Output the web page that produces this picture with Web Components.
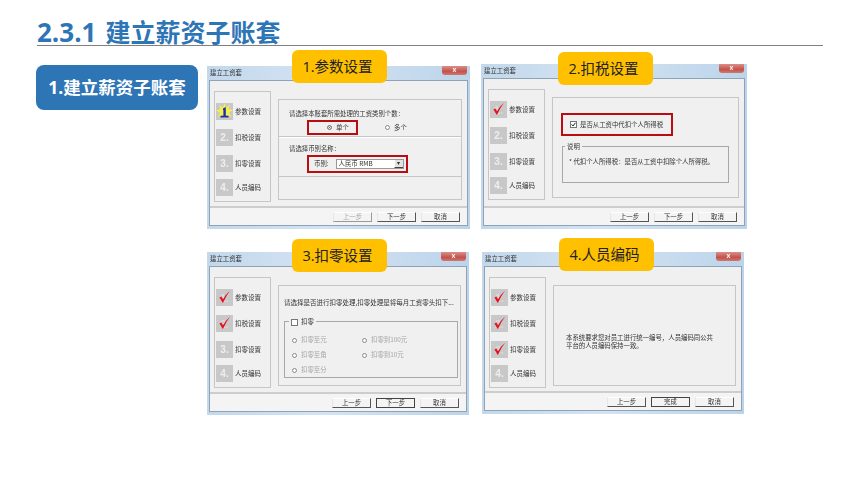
<!DOCTYPE html>
<html lang="zh">
<head>
<meta charset="utf-8">
<title>2.3.1 建立薪资子账套</title>
<style>
  html, body { margin: 0; padding: 0; background: #fff; }
  body { width: 860px; height: 484px; overflow: hidden; font-family: "Open Sans", "Noto Sans CJK SC", sans-serif; }
</style>
</head>
<body>
<salary-slide></salary-slide>
<script>
// small base class, every element just gives its css and markup
class Part extends HTMLElement {
  constructor() {
    super();
    this.attachShadow({mode: 'open'});
  }
  connectedCallback() {
    this.shadowRoot.innerHTML = `<style>${this.css()}</style>${this.html()}`;
  }
  css() { return ':host { display: block; }'; }
  html() { return '<slot></slot>'; }
  attr(name, fallback = '') { return this.getAttribute(name) || fallback; }
}

class SalarySlide extends Part {
  css() {
    return `
      :host { display: block; width: 860px; height: 484px; }
      header {
        margin: 0 37px;
        height: 45px;
        border-bottom: 1px solid #808080;
        color: #2e75b6;
        font: 700 26px/1 "Open Sans", "Noto Sans CJK SC", sans-serif;
        display: flex;
        align-items: flex-end;
        gap: 9px;
      }
      header span { display: block; }
      header .cn { font-size: 25px; }
      main { display: flex; gap: 9px; margin: 18px 0 0 36px; align-items: flex-start; }
      .pill {
        width: 162px;
        height: 45px;
        margin-top: 1px;
        border-radius: 8px;
        background: #2e75b6;
        color: #fff;
        font: 700 17.5px/44px "Open Sans", "Noto Sans CJK SC", sans-serif;
        text-align: center;
        flex: none;
      }
      .grid { display: grid; grid-template-columns: 263px 266px; grid-template-rows: 165px 165px; column-gap: 11px; row-gap: 23px; }
      .d1 { margin-top: 2px; }
      .d4 { margin-left: 1px; margin-right: 3px; margin-bottom: 3px; }
      .d3 { margin-bottom: 2px; margin-right: 1px; }
    `;
  }
  html() {
    return `
      <header><span>2.3.1</span><span class="cn">建立薪资子账套</span></header>
      <main>
        <div class="pill">1.建立薪资子账套</div>
        <div class="grid">
          <wage-dialog class="d1" badge="1.参数设置" badge-x="85" badge-y="-16" done="0" back-off>
            <panel-params></panel-params>
          </wage-dialog>
          <wage-dialog class="d2" badge="2.扣税设置" badge-x="77" badge-y="-12" done="1">
            <panel-tax></panel-tax>
          </wage-dialog>
          <wage-dialog class="d3" badge="3.扣零设置" badge-x="85" badge-y="-13" done="2" default-next>
            <panel-round></panel-round>
          </wage-dialog>
          <wage-dialog class="d4" badge="4.人员编码" badge-x="77" badge-y="-14" done="3" default-next next="完成">
            <panel-code></panel-code>
          </wage-dialog>
        </div>
      </main>
    `;
  }
}

class WageDialog extends Part {
  css() {
    return `
      :host { display: block; position: relative; }
      .window {
        height: 100%;
        box-sizing: border-box;
        display: flex;
        flex-direction: column;
        padding: 0 2px 3px;
        background: linear-gradient(90deg, #c3d8ec 0%, #d3e3f2 45%, #bcd4ea 100%);
        filter: blur(.45px);
        color: #333;
        font: 6.4px/1.2 "Noto Sans CJK SC", sans-serif;
      }
      .title { height: 14px; flex: none; display: flex; align-items: flex-start; color: #333; line-height: 13px; margin-left: 1px; }
      .close {
        margin: 0 1px 0 auto;
        width: 25px;
        height: 9px;
        border-radius: 0 0 3px 3px;
        background: linear-gradient(#d98f89, #c4524b 60%, #cf7770);
        color: #fff;
        font: 700 7px/8px "Liberation Sans", sans-serif;
        text-align: center;
      }
      .body { flex: 1; min-height: 0; display: flex; flex-direction: column; background: #f0f0f0; border: 1px solid #8ea3b6; }
      .content { flex: 1; min-height: 0; display: flex; gap: 7px; padding: 10px 5px 0 4px; align-items: flex-start; }
      .steps {
        flex: none;
        width: 54px;
        height: 98px;
        padding: 11px 0 0 1px;
        border: 1px solid #c6c6c6;
        display: flex;
        flex-direction: column;
        gap: 9px;
      }
      .panel { flex: 1; min-width: 0; height: 99px; margin-top: 8px; border: 1px solid #c6c6c6; }
      .foot {
        flex: none;
        height: 17px;
        border-top: 2px solid #cdcdcd;
        background: #f4f4f4;
        display: flex;
        justify-content: flex-end;
        align-items: center;
        gap: 5px;
        padding-right: 7px;
      }
      .badge {
        position: absolute;
        box-sizing: border-box;
        width: 95px;
        height: 33px;
        padding-right: 4px;
        border-radius: 6px;
        background: #ffc000;
        color: #222;
        font: 14.5px/33px "Open Sans", "Noto Sans CJK SC", sans-serif;
        text-align: center;
      }
    `;
  }
  html() {
    const done = +this.attr('done', '0');
    const labels = ['参数设置', '扣税设置', '扣零设置', '人员编码'];
    const steps = labels.map((label, i) => {
      const state = i < done ? 'done' : (i === 0 && done === 0 ? 'active' : 'todo');
      return `<wage-step n="${i + 1}" state="${state}">${label}</wage-step>`;
    }).join('');
    return `
      <div class="window">
        <div class="title"><span>建立工资套</span><div class="close">x</div></div>
        <div class="body">
          <div class="content">
            <div class="steps">${steps}</div>
            <div class="panel"><slot></slot></div>
          </div>
          <div class="foot">
            <wage-button ${this.hasAttribute('back-off') ? 'off' : ''}>上一步</wage-button>
            <wage-button ${this.hasAttribute('default-next') ? 'main' : ''}>${this.attr('next', '下一步')}</wage-button>
            <wage-button>取消</wage-button>
          </div>
        </div>
      </div>
      <div class="badge" style="left:${this.attr('badge-x')}px;top:${this.attr('badge-y')}px">${this.attr('badge')}</div>
    `;
  }
}

class WageStep extends Part {
  css() {
    return `
      :host { display: flex; align-items: center; gap: 2px; height: 17px; }
      :host([n="4"]) { margin-top: -2px; }
      .thumb { position: relative; width: 17px; height: 17px; background: #c8c8c8; flex: none; color: #eee; font: 700 10px/17px "Liberation Sans", sans-serif; text-align: center; }
      :host([state="done"]) .thumb { color: #dcdcdc; padding-top: 2px; height: 15px; line-height: 15px; }
      svg { position: absolute; left: 0; top: 0; }
      .label { white-space: nowrap; font-size: 6.5px; color: #333; }
    `;
  }
  html() {
    const n = this.attr('n');
    const state = this.attr('state');
    let art = '';
    if (state === 'done') {
      art = `<svg width="17" height="17" viewBox="0 0 17 17"><path d="M3.4 8.4 L5.4 7.6 L7 10.2 Q9.6 5.6 14 1.8 Q10.2 6.8 7.2 13.4 L6.2 13.4 Q5 10.6 3.4 8.4 Z" fill="#e6121f"/></svg>`;
    }
    if (state === 'active') {
      art = `<svg width="17" height="17" viewBox="0 0 17 17">
        <path d="M8.5 0 L10 4.5 L14 2 L12.5 6 L17 7 L13 9.5 L15.5 14 L10.5 12 L8.5 16 L7 12 L2 14 L4 9.5 L0 7.5 L4.5 6 L3 2 L7 4.5 Z" fill="#f5ef4a"/>
        <path d="M7 5.5 L9.8 4 V12.8 H12.5 V14.6 H4.5 V12.8 H7.4 V7 L7 7 Z" fill="#1b2fa8"/>
      </svg>`;
    }
    return `<div class="thumb">${state === 'active' ? '' : n + '.'}${art}</div><div class="label"><slot></slot></div>`;
  }
}

class WageButton extends Part {
  css() {
    return `
      :host {
        display: block;
        width: 39px;
        height: 10px;
        box-sizing: border-box;
        border-right: 1px solid #555;
        border-bottom: 1px solid #555;
        border-left: 1px solid #e6e6e6;
        border-top: 1px solid #fff;
        text-align: center;
        font-size: 6.4px;
        line-height: 8px;
        color: #333;
      }
      :host([off]) { color: #a8a8a8; border-right-color: #999; border-bottom-color: #999; }
      :host([main]) { border: 1px solid #444; }
    `;
  }
}

class DlgRadio extends Part {
  css() {
    return `
      :host { display: inline-flex; align-items: center; gap: 4px; white-space: nowrap; font-size: 6.4px; line-height: 8px; }
      :host([off]) { color: #a6a6a6; }
      i { display: block; box-sizing: border-box; width: 5px; height: 5px; border: 1px solid #888; border-radius: 50%; background: #fff; }
      :host([on]) i { background: #333; box-shadow: inset 0 0 0 1px #fff; }
    `;
  }
  html() { return '<i></i><span><slot></slot></span>'; }
}

class DlgCheck extends Part {
  css() {
    return `
      :host { display: inline-flex; align-items: center; gap: 3px; white-space: nowrap; font-size: 6.4px; line-height: 8px; }
      i { display: block; width: 5px; height: 5px; border: 1px solid #777; background: #fff; position: relative; }
      svg { position: absolute; left: 0; top: 0; }
    `;
  }
  html() {
    const tick = this.hasAttribute('on') ? '<svg width="5" height="5" viewBox="0 0 5 5"><path d="M.6 2.4 L2 4 L4.4 .8" fill="none" stroke="#222" stroke-width="1"/></svg>' : '';
    return `<i>${tick}</i><span><slot></slot></span>`;
  }
}

class RedFrame extends Part {
  css() { return ':host { display: block; box-sizing: border-box; border: 2px solid #b90d12; }'; }
}

class DlgGroup extends Part {
  css() {
    return `
      :host { display: block; position: relative; box-sizing: border-box; border: 1px solid #a8a8a8; }
      .legend { position: absolute; left: var(--legend-x, 2px); top: -4px; padding: 0 2px; background: #f0f0f0; line-height: 8px; font-size: 6.4px; }
    `;
  }
  html() { return '<div class="legend"><slot name="legend"></slot></div><slot></slot>'; }
}

class PanelParams extends Part {
  css() {
    return `
      :host { display: flex; flex-direction: column; height: 100%; }
      section { border-bottom: 1px solid #c6c6c6; box-sizing: border-box; }
      .a { height: 37px; padding: 10px 0 0 10px; }
      .b { height: 40px; padding: 7px 0 0 10px; border-top: 1px solid #fff; }
      .c { flex: 1; border: 0; }
      p { margin: 0; line-height: 8px; white-space: nowrap; }
      .row { display: flex; margin: 2px 0 0 18px; align-items: center; }
      .one { width: 51px; height: 15px; display: flex; justify-content: center; align-items: center; padding-left: 11px; }
      .many { margin-left: 27px; }
      .cur { width: 101px; height: 18px; margin: 2px 0 0 18px; display: flex; align-items: center; padding-left: 5px; gap: 7px; }
      .select { width: 68px; height: 10px; box-sizing: border-box; background: #fff; border: 1px solid #999; display: flex; justify-content: space-between; line-height: 8px; padding-left: 2px; }
      .select b { display: block; width: 8px; background: #e2e2e2; border-left: 1px solid #fff; border-bottom: 1px solid #444; text-align: center; font: 6px/7px "Liberation Sans", sans-serif; }
    `;
  }
  html() {
    return `
      <section class="a">
        <p>请选择本账套所需处理的工资类别个数：</p>
        <div class="row">
          <red-frame class="one"><dlg-radio on>单个</dlg-radio></red-frame>
          <dlg-radio class="many">多个</dlg-radio>
        </div>
      </section>
      <section class="b">
        <p>请选择币别名称：</p>
        <red-frame class="cur"><span>币别:</span><div class="select"><span>人民币 RMB</span><b>▾</b></div></red-frame>
      </section>
      <section class="c"></section>
    `;
  }
}

class PanelTax extends Part {
  css() {
    return `
      :host { display: block; padding: 15px 0 0 8px; }
      .hit { width: 112px; height: 23px; display: flex; align-items: center; padding-left: 7px; }
      dlg-group { width: 167px; height: 37px; margin: 10px 0 0 1px; }
      p { margin: 0; padding: 10px 0 0 6px; white-space: nowrap; line-height: 9px; }
    `;
  }
  html() {
    return `
      <red-frame class="hit"><dlg-check on>是否从工资中代扣个人所得税</dlg-check></red-frame>
      <dlg-group><span slot="legend">说明</span><p>* 代扣个人所得税：是否从工资中扣除个人所得税。</p></dlg-group>
    `;
  }
}

class PanelRound extends Part {
  css() {
    return `
      :host { display: block; padding: 12px 0 0 5px; }
      p { margin: 0; white-space: nowrap; line-height: 9px; font-size: 6.5px; }
      dlg-group { width: 174px; height: 57px; margin-top: 14px; --legend-x: 4px; }
      .opts { display: grid; grid-template-columns: 70px 80px; row-gap: 7px; padding: 14px 0 0 7px; }
    `;
  }
  html() {
    return `
      <p>请选择是否进行扣零处理,扣零处理是将每月工资零头扣下...</p>
      <dlg-group>
        <dlg-check slot="legend">扣零</dlg-check>
        <div class="opts">
          <dlg-radio off>扣零至元</dlg-radio><dlg-radio off>扣零到100元</dlg-radio>
          <dlg-radio off>扣零至角</dlg-radio><dlg-radio off>扣零到10元</dlg-radio>
          <dlg-radio off>扣零至分</dlg-radio>
        </div>
      </dlg-group>
    `;
  }
}

class PanelCode extends Part {
  css() {
    return `
      :host { display: block; padding: 48px 0 0 12px; }
      p { margin: 0; line-height: 7.5px; font-size: 6.4px; width: 150px; }
    `;
  }
  html() { return '<p>本系统要求您对员工进行统一编号，人员编码同公共平台的人员编码保持一致。</p>'; }
}

customElements.define('salary-slide', SalarySlide);
customElements.define('wage-dialog', WageDialog);
customElements.define('wage-step', WageStep);
customElements.define('wage-button', WageButton);
customElements.define('dlg-radio', DlgRadio);
customElements.define('dlg-check', DlgCheck);
customElements.define('red-frame', RedFrame);
customElements.define('dlg-group', DlgGroup);
customElements.define('panel-params', PanelParams);
customElements.define('panel-tax', PanelTax);
customElements.define('panel-round', PanelRound);
customElements.define('panel-code', PanelCode);
</script>
</body>
</html>
